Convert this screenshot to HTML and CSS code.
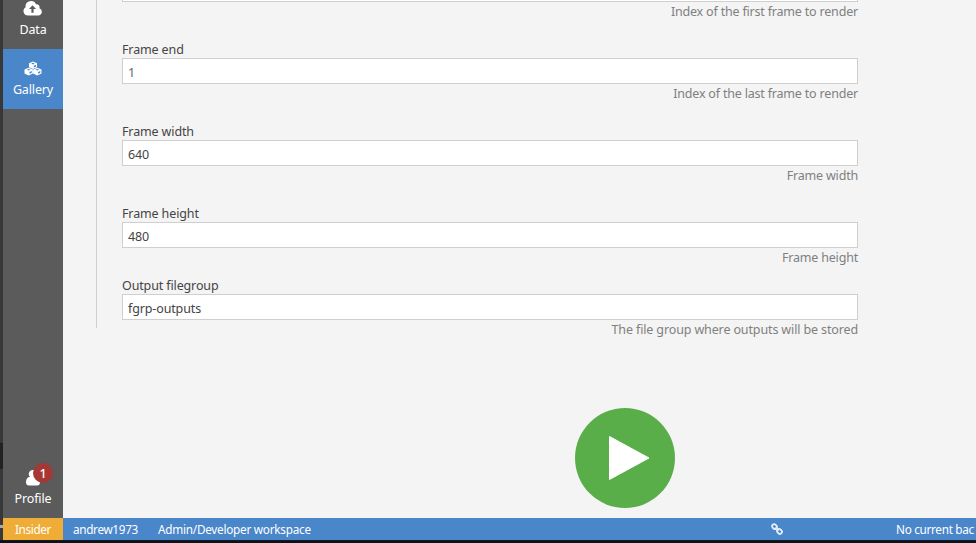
FILE: index.html
```html
<!DOCTYPE html>
<html lang="en">
<head>
<meta charset="utf-8">
<title>Gallery</title>
<link rel="stylesheet" href="styles.css">
</head>
<body>
<div class="desktop-edge"><span class="edge-window"></span><span class="edge-glow"></span></div>
<div class="app">
  <div class="workarea">
    <nav class="sidebar">
      <a class="nav-item nav-data">
        <svg class="icon-cloud" viewBox="0 0 20 15"><path fill="#fff" d="M5 14.5A4.5 4.5 0 0 1 2.6 6.2 5.5 5.5 0 0 1 13 3.2a3 3 0 0 1 3.4 4A3.8 3.8 0 0 1 15.700 14.500z"/><path fill="#5b5b5b" d="M9.500 4.300 13 8H10.600V11.800H8.400V8H6z"/></svg>
        <span>Data</span>
      </a>
      <a class="nav-item nav-gallery">
        <svg class="icon-cubes" viewBox="0 0 18 14"><g fill="#fff"><path d="M9 0l4 1.700v4L9 7.500 5 5.700v-4z"/><path d="M4.700 6.200l4.200 1.800v4L4.700 14 .5 12V8z"/><path d="M13.300 6.200l4.200 1.800v4l-4.200 2-4.200-2V8z"/></g><g fill="#4a86ca"><path d="M9 1.300l1.800.8L9 2.900l-1.800-.8zM9.800 4.300l2.200-1v1.600l-2.200 1zM4.700 7.500l1.800.8-1.800.8-1.800-.8zM5.500 10.600l2.200-1v1.600l-2.200 1zM13.300 7.500l1.800.8-1.800.8-1.800-.8zM14.100 10.600l2.200-1v1.600l-2.200 1z"/></g></svg>
        <span>Gallery</span>
      </a>
      <a class="nav-item nav-profile">
        <svg class="icon-user" viewBox="0 0 14 16"><path fill="#fff" d="M7 0a3.900 3.900 0 0 1 3 6.700c2.600.3 4 2.600 4 5.300 0 2.400-1 3.500-3 3.500H3c-2 0-3-1.100-3-3.500C0 9.300 1.400 7 4 6.700A3.900 3.900 0 0 1 7 0z"/></svg>
        <span>Profile</span>
        <b class="badge">1</b>
      </a>
    </nav>
    <main class="content">
      <form class="fields">
        <div class="field field-first"><div class="input"></div><p class="hint hint-frame">Index of the first frame to render</p></div>
        <div class="field"><label>Frame end</label><div class="input input-soft">1</div><p class="hint hint-frame">Index of the last frame to render</p></div>
        <div class="field"><label>Frame width</label><div class="input">640</div><p class="hint hint-frame">Frame width</p></div>
        <div class="field field-height"><label>Frame height</label><div class="input">480</div><p class="hint hint-frame">Frame height</p></div>
        <div class="field field-output"><label>Output filegroup</label><div class="input">fgrp-outputs</div><p class="hint">The file group where outputs will be stored</p></div>
      </form>
      <div class="actions">
        <svg class="play" viewBox="0 0 100 100"><circle cx="50" cy="50" r="50" fill="#5aae4a"/><path d="M34.500 28.500 74 50 34.500 71.500z" fill="#fff" stroke="#fff" stroke-linejoin="round"/></svg>
      </div>
    </main>
  </div>
  <footer class="statusbar">
    <span class="tier">Insider</span>
    <span class="user">andrew1973</span>
    <span class="workspace">Admin/Developer workspace</span>
    <svg class="icon-link" viewBox="0 0 12 12"><g fill="none" stroke="#e6eefa" stroke-width="1.800"><rect x="1" y="1.600" width="5" height="4" rx="1.800" transform="rotate(45 3.500 3.600)"/><rect x="6" y="6.400" width="5" height="4" rx="1.800" transform="rotate(45 8.500 8.400)"/><path d="M4.500 4.500l3 3"/></g></svg>
    <span class="task">No current bac</span>
  </footer>
</div>
</body>
</html>
```
FILE: styles.css
```css
* { box-sizing: border-box; }

body {
  margin: 0;
  width: 976px;
  height: 543px;
  overflow: hidden;
  display: flex;
  background: #07121b;
  font: 12.5px/18px "Noto Sans", "Open Sans", sans-serif;
  letter-spacing: -0.13px;
  color: #444;
}

.desktop-edge { width: 3px; height: 540px; background: #383838; padding-top: 443px; }
.edge-window { display: block; height: 26px; background: #222; border-top: 1px solid #1a1a1a; }
.edge-glow { display: block; height: 3px; margin-top: 56px; background: #aaa; }

.app { width: 973px; height: 541px; display: flex; flex-direction: column; border-bottom: 1px solid #161a1f; }
.workarea { height: 518px; display: flex; }

.sidebar { width: 60px; background: #5b5b5b; display: flex; flex-direction: column; color: #fff; }
.nav-item { display: flex; flex-direction: column; align-items: center; width: 60px; }
.nav-data { height: 49px; padding-top: 1px; }
.nav-data span { margin-top: 5px; }
.nav-gallery { height: 60px; padding-top: 12px; background: #4a86ca; }
.nav-gallery span { margin-top: 5px; }
.nav-profile { position: relative; margin-top: auto; height: 49px; }
.nav-profile span { margin-top: 5px; }
.icon-cloud { width: 20px; height: 15px; }
.icon-cubes { width: 18px; height: 15px; }
.icon-user { width: 14px; height: 16px; margin-top: 1px; margin-bottom: -1px; }
.badge {
  position: absolute;
  left: 30px;
  top: -6px;
  width: 20px;
  height: 20px;
  border-radius: 50%;
  background: #a53835;
  font-weight: 500;
  line-height: 21px;
  text-align: center;
}

.content { flex: 1; background: #f4f4f4; padding-left: 33px; overflow: hidden; }
.fields { width: 762px; height: 328px; border-left: 1px solid #cfcfcf; padding-left: 25px; }
.field { height: 82px; }
.field-first { height: 40px; }
.field-first .input { height: 2px; padding: 0; border-top: 0; }
.field-height { height: 72px; }
label { display: block; height: 18px; line-height: 20px; }
.input { height: 26px; border: 1px solid #cfcfcf; background: #fff; padding: 5px 5px 0; }
.input-soft { color: #666; }
.hint { margin: 1px 0 0; color: #808080; text-align: right; white-space: nowrap; }
.hint-frame { letter-spacing: -0.19px; }

.actions { margin: 80px 0 0 479px; }
.play { display: block; width: 100px; height: 100px; }

.statusbar { height: 22px; display: flex; align-items: center; background: #4a86ca; color: #fff; font-size: 11.75px; line-height: 24px; letter-spacing: -0.25px; white-space: nowrap; overflow: hidden; }
.tier { width: 60px; height: 22px; background: #efac37; line-height: 23px; letter-spacing: -0.35px; text-align: center; }
.user { width: 85px; padding-left: 10px; letter-spacing: -0.33px; }
.workspace { width: 623px; padding-left: 10px; }
.icon-link { width: 12px; height: 12px; flex: none; }
.task { margin-left: 113px; letter-spacing: -0.3px; }
```
